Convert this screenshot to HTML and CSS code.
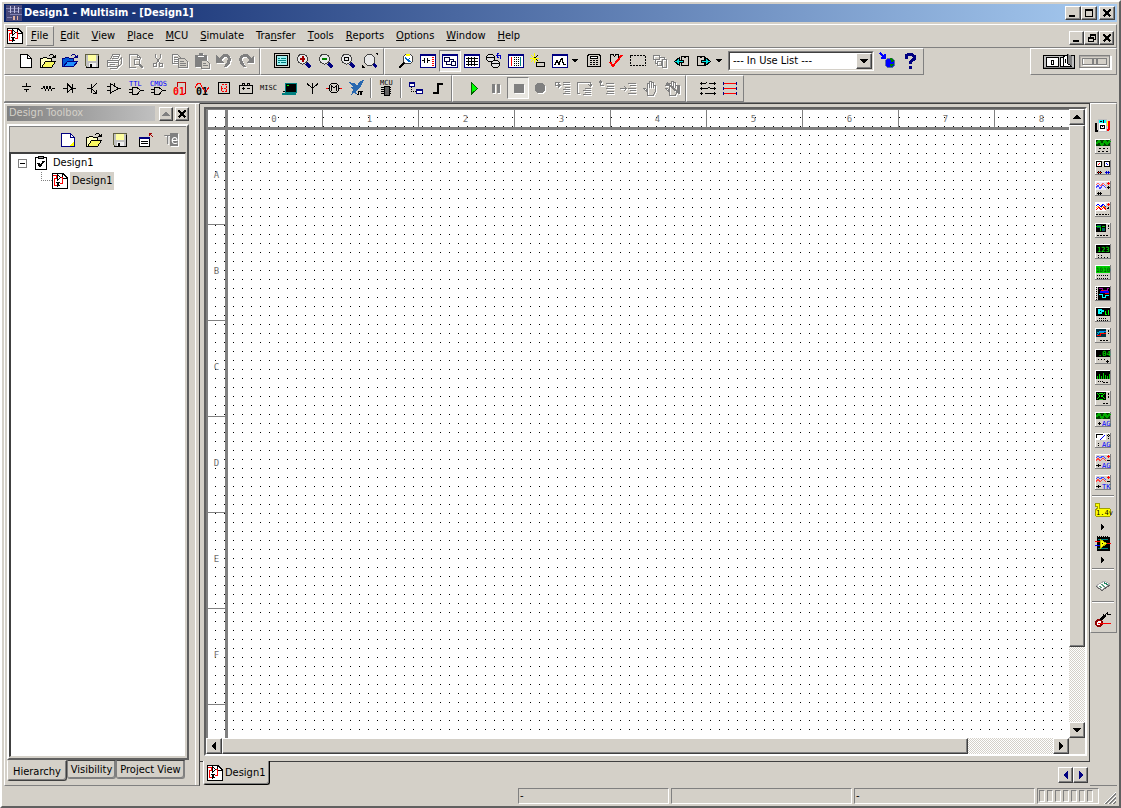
FILE: index.html
```html
<!DOCTYPE html>
<html lang="en">
<head>
  <meta charset="UTF-8"/>
  <meta name="viewport" content="width=device-width, initial-scale=1.0"/>
  <title>Design1 - Multisim - [Design1]</title>
  <link rel="stylesheet" href="styles.css">
</head>
<body>
  <!-- shared glyphs -->
  <svg class="sprite" aria-hidden="true">
    <symbol id="schematic" viewBox="0 0 16 16">
      <path d="M.5 .5H11L15.500 5V15.500H.5Z" fill="#fff"/>
      <path d="M10.500 1V5.500H15"/>
      <path d="M1 2.500H4.500V5.500H2.500V12.500H5.500M8 4.500H10.500V10.500H8" stroke="#f00"/>
      <path d="M5.500 2V7L8.500 4.500ZM4 9.500H7M5.500 8.500V13.500M6 10.500L8.500 8.500M6 11.500L8.500 13.500"/>
    </symbol>
    <symbol id="floppy" viewBox="0 0 16 16">
      <path d="M1.500 1.500H14.500V14.500H3.500L1.500 12.500Z" fill="#c0c0c0" stroke="#606040"/>
      <path d="M4 2H12V8H4Z" fill="#ffffa0" stroke="none"/>
      <path d="M5 10H12V14H5Z" fill="#f0f0f0" stroke="none"/>
      <path d="M6 11H8V14H6Z" fill="#000" stroke="none"/>
      <path d="M2 14.500H14.500V3"/>
    </symbol>
    <symbol id="folder" viewBox="0 0 16 16">
      <path d="M.5 14.500V5.500H2.500L3.500 4.500H6.500L7.500 5.500H11.500V8.500" fill="#ffffc0"/>
      <path d="M1.500 14.500L5.500 8.500H15.500L11.500 14.500Z" fill="#f8f860"/>
      <path d="M8.500 3.500L10.500 1.500H12.500L14.500 4M15.500 2V4.500H12"/>
    </symbol>
    <symbol id="lens" viewBox="0 0 16 16">
      <circle cx="6.500" cy="6" r="5" fill="#e8e8e8" stroke="#404040"/>
      <path d="M10.500 10.500L14.500 14.500" stroke="#000080" stroke-width="3"/>
    </symbol>
    <symbol id="up" viewBox="0 0 7 7"><path d="M0 5H7L3.500 1Z" fill="currentColor" stroke="none"/></symbol>
    <symbol id="down" viewBox="0 0 7 7"><path d="M0 2H7L3.500 6Z" fill="currentColor" stroke="none"/></symbol>
    <symbol id="left" viewBox="0 0 7 7"><path d="M5 0V7L1 3.500Z" fill="currentColor" stroke="none"/></symbol>
    <symbol id="right" viewBox="0 0 7 7"><path d="M2 0V7L6 3.500Z" fill="currentColor" stroke="none"/></symbol>
    <symbol id="close" viewBox="0 0 8 8"><path d="M.5 .5L7.500 7.500M7.500 .5L.5 7.500" stroke-width="2"/></symbol>
    <symbol id="case" viewBox="0 0 16 15">
      <path d="M0 0H16V15H0Z" fill="#d4d0c8" stroke="none"/>
      <path d="M.5 14.500V.5H15" stroke="#fff"/>
      <path d="M15.500 0V14.500H0" stroke="#808080"/>
    </symbol>
    <symbol id="gate" viewBox="0 0 16 16"><path d="M4.500 7.500H9L12.500 10.500L9 14.500H4.500ZM1 9.500H4M1 12.500H4M13 10.500H16"/></symbol>
    <symbol id="hand" viewBox="0 0 16 16"><path d="M5.500 15V12L1.500 8.500H3.500L5.500 10V3.500H7.500V8V1.500H9.500V8V2.500H11.500V8V5.500H13.500V11L11.500 15Z"/></symbol>
    <symbol id="pane" viewBox="0 0 16 16"><path d="M.5 1.500H15.500V14.500H.5Z" fill="#fff" stroke="#000080"/><path d="M0 2H16" stroke="#000080" stroke-width="2"/></symbol>
  </svg>

  <div class="window">
    <header class="titlebar">
      <svg class="icon" viewBox="0 0 16 16"><path d="M0 0H16V16H0Z" fill="#484878" stroke="none"/><path d="M0 3.500H16M2 6.500H12M4 9.500H16M1 12.500H6" stroke="#8080b0"/><path d="M4.500 1V8M8.500 1V8M12.500 2V8" stroke="#c0c0e0"/><path d="M7 11H9V15H7ZM11 11H12V15H11Z" fill="#e0b0a0" stroke="none"/></svg>
      <h1>Design1 - Multisim - [Design1]</h1>
      <div class="winbtns">
        <button class="winbtn" aria-label="Minimize"><svg class="glyph" viewBox="0 0 8 8"><path d="M0 7H6" stroke-width="2"/></svg></button>
        <button class="winbtn" aria-label="Maximize"><svg class="glyph" viewBox="0 0 8 8"><path d="M0 1H8" stroke-width="2"/><path d="M.5 1V7.500H7.500V1"/></svg></button>
        <button class="winbtn apart" aria-label="Close"><svg class="glyph" viewBox="0 0 8 8"><use href="#close"/></svg></button>
      </div>
    </header>

    <nav class="band menubar">
      <svg class="icon" viewBox="0 0 16 16"><use href="#schematic"/></svg>
      <div class="menus">
        <button class="menu hot"><u>F</u>ile</button>
        <button class="menu"><u>E</u>dit</button>
        <button class="menu"><u>V</u>iew</button>
        <button class="menu"><u>P</u>lace</button>
        <button class="menu"><u>M</u>CU</button>
        <button class="menu"><u>S</u>imulate</button>
        <button class="menu">Tra<u>n</u>sfer</button>
        <button class="menu"><u>T</u>ools</button>
        <button class="menu"><u>R</u>eports</button>
        <button class="menu"><u>O</u>ptions</button>
        <button class="menu"><u>W</u>indow</button>
        <button class="menu"><u>H</u>elp</button>
      </div>
      <div class="winbtns">
        <button class="winbtn small" aria-label="Minimize document"><svg class="glyph" viewBox="0 0 8 8"><path d="M0 7H6" stroke-width="2"/></svg></button>
        <button class="winbtn small" aria-label="Restore document"><svg class="glyph" viewBox="0 0 8 8"><path d="M2.500 3V.5H7.500V5.500H6M2 1.500H8M.5 3.500H5.500V7.500H.5ZM0 4.500H6"/></svg></button>
        <button class="winbtn small" aria-label="Close document"><svg class="glyph" viewBox="0 0 8 8"><use href="#close"/></svg></button>
      </div>
    </nav>

    <div class="rebar">
      <div class="band toolbar">
        <button class="tool" aria-label="New"><svg class="icon" viewBox="0 0 16 16"><path d="M2.500 1.500H9.500L13.500 5.500V14.500H2.500Z" fill="#fff"/><path d="M9.500 1.500V5.500H13.500"/></svg></button>
        <button class="tool" aria-label="Open"><svg class="icon" viewBox="0 0 16 16"><use href="#folder"/></svg></button>
        <button class="tool" aria-label="Open samples"><svg class="icon" viewBox="0 0 16 16"><path d="M.5 13.500V5.500H2.500L3.500 4.500H6.500L7.500 5.500H11.500V8.500" fill="#0058d8" stroke="#000080"/><path d="M1.500 13.500L5.500 8.500H15.500L11.500 13.500Z" fill="#2090ff" stroke="#000080"/><path d="M8.500 3.500L10.500 1.500H12.500L14.500 4M15.500 2V4.500H12" stroke="#000080"/></svg></button>
        <button class="tool" aria-label="Save"><svg class="icon" viewBox="0 0 16 16"><use href="#floppy"/></svg></button>
        <button class="tool off" aria-label="Print"><svg class="icon" viewBox="0 0 16 16"><path d="M4.500 6.500L6.500 1.500H13.500L11.500 6.500M1.500 7.500H12.500L15 5V11L12.500 13.500H1.500ZM1.500 9.500H12M12.500 7.500V13M7 3.500H12M6 5.500H11M3.500 11.500H9M4 15H11L13 13"/></svg></button>
        <button class="tool off" aria-label="Print preview"><svg class="icon" viewBox="0 0 16 16"><path d="M8 14.500H1.500V1.500H9.500L12.500 4.500V6M9.500 1.500V4.500H12.500"/><circle cx="9" cy="9" r="3"/><path d="M11 11L15 15" stroke-width="2"/></svg></button>
        <button class="tool off" aria-label="Cut"><svg class="icon" viewBox="0 0 16 16"><path d="M5.500 1V4L9.500 10M10.500 1V4L6.500 10"/><circle cx="5" cy="12" r="2"/><circle cx="11" cy="12" r="2"/></svg></button>
        <button class="tool off" aria-label="Copy"><svg class="icon" viewBox="0 0 16 16"><path d="M.5 1.500H5.500L8.500 4.500V10.500H.5ZM2 4.500H6M2 6.500H7M2 8.500H7"/><path d="M6.500 5.500H12.500L15.500 8.500V14.500H6.500Z" fill="#d4d0c8"/><path d="M8 8.500H12M8 10.500H14M8 12.500H14"/></svg></button>
        <button class="tool off" aria-label="Paste"><svg class="icon" viewBox="0 0 16 16"><path d="M1 2H5V0H9V2H13V14H1Z" fill="#808080" stroke="none"/><path d="M7.500 7.500H12.500L15.500 10.500V15.500H7.500Z" fill="#d4d0c8"/><path d="M9 10.500H12M9 12.500H14"/><path d="M4 3.500H10" stroke="#fff"/></svg></button>
        <button class="tool off" aria-label="Undo"><svg class="icon" viewBox="0 0 16 16"><path d="M0 2V10H8L5 7L8 4H11L12 6L11 9L8 14H11L14 10L15 6L13 2L10 1H7L3 5Z" fill="#808080" stroke="none"/></svg></button>
        <button class="tool off" aria-label="Redo"><svg class="icon" viewBox="0 0 16 16"><path d="M16 2V10H8L11 7L8 4H5L4 6L5 9L8 14H5L2 10L1 6L3 2L6 1H9L13 5Z" fill="#808080" stroke="none"/></svg></button>
      </div>
      <div class="band toolbar">
        <button class="tool" aria-label="Full screen"><svg class="icon" viewBox="0 0 16 16"><path d="M.5 .5H15.500V14.500H.5Z" fill="#d4d0c8"/><path d="M2.500 2.500H13.500V12.500H2.500Z" fill="#a0f0f0"/><path d="M4 5.500H6M7 5.500H12M4 7.500H12M4 9.500H6M7 9.500H12" stroke="#008080"/></svg></button>
        <button class="tool" aria-label="Zoom in"><svg class="icon" viewBox="0 0 16 16"><use href="#lens"/><path d="M4 6H9M6.500 3V9" stroke="#a00000" stroke-width="2"/></svg></button>
        <button class="tool" aria-label="Zoom out"><svg class="icon" viewBox="0 0 16 16"><use href="#lens"/><path d="M4 6H9" stroke="#008000" stroke-width="2"/></svg></button>
        <button class="tool" aria-label="Zoom area"><svg class="icon" viewBox="0 0 16 16"><use href="#lens"/><path d="M4.500 4.500H8.500V7.500H4.500Z"/></svg></button>
        <button class="tool" aria-label="Zoom fit"><svg class="icon" viewBox="0 0 16 16"><circle cx="7.500" cy="7" r="5.500" fill="#e8e8e8" stroke="#404040"/><path d="M11.500 11L14.500 14" stroke="#000080" stroke-width="3"/><path d="M13 0H16V3ZM0 12V15H3Z" fill="#000" stroke="none"/></svg></button>
      </div>
      <div class="band toolbar">
        <button class="tool" aria-label="Find"><svg class="icon" viewBox="0 0 16 16"><circle cx="10" cy="6" r="5" fill="#fff" stroke="#404040"/><path d="M6 10L1 15" stroke-width="2"/><path d="M7 4L10 6L13 3L11 7L13 9H10L8 7Z" fill="#0060c0" stroke="none"/><path d="M8 1H12V3H8Z" fill="#ff0" stroke="none"/></svg></button>
        <button class="tool" aria-label="Component"><svg class="icon" viewBox="0 0 16 16"><use href="#pane"/><path d="M2 7.500H4M4.500 5V10M7.500 5V10M8 7.500H10"/><path d="M12.500 4V13" stroke="#f00" stroke-width="2" stroke-dasharray="1 1"/></svg></button>
        <button class="tool pressed" aria-label="Design Toolbox"><svg class="icon" viewBox="0 0 16 16"><use href="#pane"/><path d="M2.500 4.500H7.500V8.500H2.500ZM9.500 8.500H13.500V12.500H9.500ZM8 6.500H11.500V8M4.500 9V11.500H9" stroke="#000040"/></svg></button>
        <button class="tool" aria-label="Spreadsheet"><svg class="icon" viewBox="0 0 16 16"><use href="#pane"/><path d="M2 5.500H14M2 8.500H14M2 11.500H14M4.500 4V13M7.500 4V13M10.500 4V13"/></svg></button>
        <button class="tool" aria-label="Database manager"><svg class="icon" viewBox="0 0 16 16"><path d="M.5 3.500L2.500 1.500H6.500L8.500 3.500V6.500L6.500 8.500H2.500L.5 6.500ZM5.500 9.500L7.500 7.500H11.500L13.500 9.500V12.500L11.500 14.500H7.500L5.500 12.500Z" fill="#e0e0e0"/><path d="M1 4.500H8M6 10.500H13"/><path d="M14.500 6V2.500H11M12.500 0L10.500 2.500L12.500 5" stroke="#0000c0"/></svg></button>
        <button class="tool" aria-label="Netlist"><svg class="icon" viewBox="0 0 16 16"><use href="#pane"/><path d="M3.500 4V13" stroke="#f00"/><path d="M6.500 4V13M8.500 4V13M10.500 4V13" stroke-dasharray="1 1"/><path d="M12.500 4V13" stroke="#008080"/></svg></button>
        <button class="tool" aria-label="Create component"><svg class="icon" viewBox="0 0 16 16"><path d="M4.500 0V10M0 5.500H9M1 2L8 9M8 2L1 9" stroke="#ffff00"/><path d="M3.500 4.500H6M8 2L6 4M8 8L6 6"/><path d="M6.500 9.500H14.500V13.500H6.500Z" fill="#d4d0c8"/></svg></button>
        <button class="tool" aria-label="Grapher"><svg class="icon" viewBox="0 0 16 16"><use href="#pane"/><path d="M2 11.500H3.500V9.500H4.500V7.500H5.500V9.500H6.500V11.500H7.500V8.500H8.500V6.500H9.500V5.500H10.500V9.500H11.500V11.500H14"/></svg></button>
        <button class="drop" aria-label="Grapher options"><svg class="glyph" viewBox="0 0 7 7"><path d="M1 2H6L3.500 5Z" fill="#000" stroke="none"/></svg></button>
        <button class="tool" aria-label="Postprocessor"><svg class="icon" viewBox="0 0 16 16"><path d="M1.500 2.500H2.500V1.500H13.500V2.500H14.500V13.500H1.500Z" fill="#d4d0c8"/><path d="M4.500 3.500H11.500V5.500H4.500Z" fill="#fff"/><path d="M4 7.500H13M4 9.500H13M4 11.500H13" stroke-dasharray="2 1"/></svg></button>
        <button class="tool" aria-label="Electrical rules check"><svg class="icon" viewBox="0 0 16 16"><path d="M2.500 10V1.500H5L6.500 3.500L8 1.500H10.500V7"/><path d="M2 9L5 13L14 2" stroke="#f00" stroke-width="2"/></svg></button>
        <button class="tool" aria-label="Capture area"><svg class="icon" viewBox="0 0 16 16"><path d="M.5 2.500H15.500V12.500H.5Z" stroke-dasharray="2 1"/></svg></button>
        <button class="tool off" aria-label="Parent sheet"><svg class="icon" viewBox="0 0 16 16"><path d="M1.500 2.500H7.500V6.500H1.500ZM5.500 8.500H9.500V12.500H5.500ZM10.500 6.500H14.500V14.500H10.500ZM8 4.500H12.500V6M3.500 7V10.500H5"/></svg></button>
        <button class="tool" aria-label="Back annotate"><svg class="icon" viewBox="0 0 16 16"><path d="M7.500 12.500V3.500H10L11 5L12 3.500H14.500V12.500H8"/><path d="M.5 8.500L5.500 4.500V7.500H9.500V9.500H5.500V12.500Z" fill="#00e0e0"/></svg></button>
        <button class="tool" aria-label="Forward annotate"><svg class="icon" viewBox="0 0 16 16"><path d="M1.500 12.500V3.500H4L5 5L6 3.500H8.500V12.500H2"/><path d="M14.500 8.500L9.500 4.500V7.500H5.500V9.500H9.500V12.500Z" fill="#00e0e0"/></svg></button>
        <button class="drop" aria-label="Annotate options"><svg class="glyph" viewBox="0 0 7 7"><path d="M1 2H6L3.500 5Z" fill="#000" stroke="none"/></svg></button>
        <div class="combo">
          <select aria-label="In use list"><option>--- In Use List ---</option></select>
          <span class="face"><svg class="glyph" viewBox="0 0 7 7"><use href="#down"/></svg></span>
        </div>
        <button class="tool" aria-label="Web site"><svg class="icon" viewBox="0 0 16 16"><circle cx="10" cy="10" r="5" fill="#0000ff" stroke="#6070a0"/><path d="M10 5L13 6L14 8L11 9ZM9 12L11 11L14 11L12 14Z" fill="#008000" stroke="none"/><path d="M0 0L5 5M5 1V5H1" stroke="#0000ff" stroke-width="2"/></svg></button>
        <button class="tool" aria-label="Help"><svg class="icon" viewBox="0 0 16 16"><path d="M4 6V3L6 1.500H10L12 3V6L8.500 9V11" stroke="#000080" stroke-width="3"/><path d="M7 13H10V16H7Z" fill="#000080" stroke="none"/></svg></button>
      </div>
      <div class="band toolbar sim">
        <button aria-label="Simulation switch"><svg class="icon wide" viewBox="0 0 32 16"><path d="M.5 1.500H31.500V14.500H.5Z" fill="#c0c0c0" stroke="#000"/><path d="M1 13.500H31" stroke="#808080"/><path d="M3.500 3.500H15.500V12.500H3.500ZM17.500 3.500H20V12.500H17.500Z" fill="#fff"/><path d="M20.500 12.500V3L24.500 .5V9L28.500 12.500Z" fill="#fff"/><path d="M24.500 0L29 2V12L24.500 9Z" fill="#808080" stroke="none"/><path d="M8.500 6.500H10.500V10.500H8.500ZM22.500 5V9"/></svg></button>
        <button aria-label="Pause switch"><svg class="icon wide" viewBox="0 0 32 16"><path d="M1 14.500H31.500V2" stroke="#fff" stroke-width="2"/><path d="M.5 1.500H30.500V13.500H.5Z" stroke="#808080"/><path d="M1 2.500H30M1.500 2V13" stroke="#b0aca8"/><path d="M4.500 5V11.500H28" stroke="#fff"/><path d="M3.500 4.500H27.500V10.500H3.500Z" stroke="#808080"/><path d="M14 4V11M18 4V11" stroke="#808080" stroke-width="2"/></svg></button>
      </div>
    </div>

    <div class="rebar">
      <div class="band toolbar">
        <button class="tool" aria-label="Source"><svg class="icon" viewBox="0 0 16 16"><path d="M8.500 3V6M4 6.500H13M6 9.500H11M8.500 9V12"/></svg></button>
        <button class="tool" aria-label="Basic"><svg class="icon" viewBox="0 0 16 16"><path d="M1 8L3 8L4 6L5.500 10L7 6L8.500 10L10 6L11.500 10L12.500 8H15"/></svg></button>
        <button class="tool" aria-label="Diode"><svg class="icon" viewBox="0 0 16 16"><path d="M1 8.500H5M5.500 4V12L10 8.500ZM10.500 4V13M11 8.500H14"/></svg></button>
        <button class="tool" aria-label="Transistor"><svg class="icon" viewBox="0 0 16 16"><path d="M3 8.500H7M7.500 4V13M7.500 8.500L12.500 3.500M7.500 8.500L12.500 13.500M9 13H12V10"/></svg></button>
        <button class="tool" aria-label="Analog"><svg class="icon" viewBox="0 0 16 16"><path d="M4.500 3.500V13L12.500 8.500ZM1 6.500H4M1 10.500H4M12.500 8.500H15M8.500 3V6"/></svg></button>
        <button class="tool" aria-label="TTL"><svg class="icon" viewBox="0 0 16 16"><use href="#gate"/><text class="mini blue" x="1" y="6">TTL</text></svg></button>
        <button class="tool" aria-label="CMOS"><svg class="icon" viewBox="0 0 16 16"><use href="#gate"/><text class="mini blue" x="0" y="6">CMOS</text></svg></button>
        <button class="tool" aria-label="Misc digital"><svg class="icon" viewBox="0 0 16 16"><path d="M5.500 7V2.500H13.500V13.500H12" stroke="#c00000"/><text class="mini big red" x="1" y="15">01</text></svg></button>
        <button class="tool" aria-label="Mixed"><svg class="icon" viewBox="0 0 16 16"><path d="M1 8L4 3H6L11 12H12L15 7" stroke="#f00"/><text class="mini big" x="2" y="15">01</text></svg></button>
        <button class="tool" aria-label="Indicator"><svg class="icon" viewBox="0 0 16 16"><path d="M2.500 2.500H13.500V13.500H2.500Z"/><path d="M5.500 4.500H10.500V11.500H5.500ZM5 8.500H11" stroke="#f00" stroke-dasharray="2 1"/></svg></button>
        <button class="tool" aria-label="Power"><svg class="icon" viewBox="0 0 16 16"><path d="M1.500 5.500H14.500V13.500H1.500ZM4.500 5V3.500H6.500V5M9.500 5V3.500H11.500V5M4 8.500H7M5.500 7V10M9 8.500H12"/></svg></button>
        <button class="tool" aria-label="Miscellaneous"><svg class="icon" viewBox="0 0 16 16"><text class="mini" x="0" y="10">MISC</text></svg></button>
        <button class="tool" aria-label="Advanced peripherals"><svg class="icon" viewBox="0 0 16 16"><path d="M3.500 3.500H14.500V12.500H3.500Z" fill="#000" stroke="#008080"/><path d="M0 13.500H14" stroke="#008080" stroke-width="2"/><path d="M1 11.500H3"/><path d="M5 5.500H7" stroke="#0f0"/></svg></button>
        <button class="tool" aria-label="RF"><svg class="icon" viewBox="0 0 16 16"><path d="M8.500 3V14M3 3.500L8.500 8.500L14 3.500"/></svg></button>
        <button class="tool" aria-label="Electromechanical"><svg class="icon" viewBox="0 0 16 16"><circle cx="8" cy="8" r="5"/><path d="M5.500 11V6L8 8L10.500 6V11M3 8.500H1M13 8.500H15"/><path d="M0 8.500H2M14 8.500H16" stroke="#f00"/></svg></button>
        <button class="tool" aria-label="NI components"><svg class="icon" viewBox="0 0 16 16"><path d="M0 2L6 3L9 6L12 1L16 0L13 6L10 9L8 12L10 15L6 13L3 15L5 10L3 7L6 7Z" fill="#2868b0" stroke="none"/><path d="M9 14.500H10.500V11.500H12.500V14.500H13.500V11.500H15"/></svg></button>
        <span class="sep"></span>
        <button class="tool" aria-label="MCU"><svg class="icon" viewBox="0 0 16 16"><text class="mini" x="2" y="5">MCU</text><path d="M6 6H11V15H6Z" fill="#606060"/><path d="M3 7.500H6M3 9.500H6M3 11.500H6M3 13.500H6M11 7.500H13M11 9.500H13M11 11.500H13M11 13.500H13"/></svg></button>
        <span class="sep"></span>
        <button class="tool" aria-label="Hierarchical block"><svg class="icon" viewBox="0 0 16 16"><path d="M1.500 2.500H6.500V6.500H1.500ZM8.500 9.500H14.500V13.500H8.500Z" fill="#fff" stroke="#000080"/><path d="M1 3H7M8 10H15" stroke="#000080" stroke-width="2"/><path d="M3.500 7V11.500H8" stroke-dasharray="1 1"/></svg></button>
        <button class="tool" aria-label="Bus"><svg class="icon" viewBox="0 0 16 16"><path d="M3 13H8V4H13" stroke-width="2"/></svg></button>
      </div>
      <div class="band toolbar">
        <button class="tool" aria-label="Run"><svg class="icon" viewBox="0 0 16 16"><path d="M5.500 2.500V14L11.500 8.500Z" fill="#0f0" stroke="#006000"/></svg></button>
        <button class="tool off" aria-label="Pause"><svg class="icon" viewBox="0 0 16 16"><path d="M5.500 4V13M10.500 4V13" stroke-width="3"/></svg></button>
        <button class="tool pressed off" aria-label="Stop"><svg class="icon" viewBox="0 0 16 16"><path d="M4 4H14V13H4Z" fill="#808080" stroke="none"/></svg></button>
        <button class="tool off" aria-label="Pause at next instruction"><svg class="icon" viewBox="0 0 16 16"><circle cx="8" cy="8" r="5" fill="#808080"/></svg></button>
        <button class="tool off" aria-label="Step into"><svg class="icon" viewBox="0 0 16 16"><path d="M6 2.500H1.500V5.500H6M4 3.500L6.500 5.500L4 7.500M9 2.500H16M9 4.500H16M11 7.500H16M9 9.500H16M11 11.500H16M9 13.500H16"/></svg></button>
        <button class="tool off" aria-label="Step over"><svg class="icon" viewBox="0 0 16 16"><path d="M14.500 6V2.500H1.500V13H4M12 4L14.500 6.500L16 4M9 8.500H15M7 10.500H15M9 12.500H15M7 14.500H15"/></svg></button>
        <button class="tool off" aria-label="Step out"><svg class="icon" viewBox="0 0 16 16"><path d="M6 5.500H2.500V1M.5 3.500L2.500 1L4.500 3.500M8 3.500H16M9 6.500H16M8 8.500H16M9 11.500H16M8 13.500H16"/></svg></button>
        <button class="tool off" aria-label="Run to cursor"><svg class="icon" viewBox="0 0 16 16"><path d="M0 8.500H6M4 6L6.500 8.500L4 11M8 3.500H16M10 5.500H16M8 8.500H16M10 10.500H16M8 13.500H16"/></svg></button>
        <button class="tool off" aria-label="Toggle breakpoint"><svg class="icon" viewBox="0 0 16 16"><use href="#hand"/></svg></button>
        <button class="tool off" aria-label="Remove breakpoints"><svg class="icon" viewBox="0 0 16 16"><use href="#hand"/><path d="M3 3L15 13M15 5V14M2 6L4 3" stroke-width="2"/></svg></button>
      </div>
      <div class="band toolbar">
        <button class="tool" aria-label="Branches"><svg class="icon" viewBox="0 0 16 16"><path d="M0 3.500H5L7.500 2.500M9 3.500H16M0 8.500H6L10 7.500M10 8.500H16M0 13.500H3M5 13.500H16M1.500 2V5M14.500 2V5M1.500 7V10M14.500 7V10M1.500 12V15M14.500 12V15"/></svg></button>
        <button class="tool" aria-label="Nets"><svg class="icon" viewBox="0 0 16 16"><path d="M2 3.500H14M2 8.500H14M2 13.500H14" stroke="#f00"/><path d="M1.500 2V5M14.500 2V5M1.500 7V10M14.500 7V10M1.500 12V15M14.500 12V15" stroke="#000080"/></svg></button>
      </div>
    </div>

    <main class="work">
      <aside class="dock">
        <div class="panel">
          <div class="caption">
            <h2>Design Toolbox</h2>
            <button class="winbtn tiny off" aria-label="Roll up"><svg class="glyph" viewBox="0 0 7 7"><use href="#up"/></svg></button>
            <button class="winbtn tiny" aria-label="Close toolbox"><svg class="glyph" viewBox="0 0 8 8"><use href="#close"/></svg></button>
          </div>
          <div class="box">
            <div class="boxbar">
              <button class="tool" aria-label="New design"><svg class="icon" viewBox="0 0 16 16"><path d="M1.500 1.500H10.500L14.500 5.500V14.500H1.500Z" fill="#fff" stroke="#000080"/><path d="M10.500 1.500V5.500H14.500" stroke="#000080"/><path d="M9 14L14 9V14Z" fill="#ff0" stroke="none"/></svg></button>
              <button class="tool" aria-label="Open design"><svg class="icon" viewBox="0 0 16 16"><use href="#folder"/></svg></button>
              <button class="tool" aria-label="Save design"><svg class="icon" viewBox="0 0 16 16"><use href="#floppy"/></svg></button>
              <button class="tool" aria-label="Close design"><svg class="icon" viewBox="0 0 16 16"><path d="M1.500 5.500H11.500V14.500H1.500Z" fill="#fff"/><path d="M1 6H12" stroke="#000080" stroke-width="2"/><path d="M3 9.500H10M3 11.500H10"/><path d="M15 5L11 1M11.500 4V1.500H14" stroke="#a00000"/></svg></button>
              <button class="tool off" aria-label="Rename"><svg class="icon" viewBox="0 0 16 16"><path d="M6 1H14V14H6Z" fill="#808080" stroke="none"/><text class="mini huge gray" x="0" y="12">T</text><text class="mini huge white" x="7" y="12">e</text></svg></button>
            </div>
            <ul class="tree">
              <li>
                <button class="expander" aria-label="Collapse"></button>
                <svg class="icon" viewBox="0 0 16 16"><path d="M2.500 2.500H13.500V14.500H2.500Z" fill="#fff"/><path d="M5.500 3.500V1.500H10.500V3.500Z" fill="#a0a0a0"/><path d="M5 8L7 11L11 6" stroke-width="2"/></svg>
                <span class="node">Design1</span>
              </li>
              <li class="child">
                <span class="elbow"></span>
                <svg class="icon" viewBox="0 0 16 16"><use href="#schematic"/></svg>
                <span class="node picked">Design1</span>
              </li>
            </ul>
          </div>
          <div class="tabs">
            <button class="tab current">Hierarchy</button>
            <button class="tab">Visibility</button>
            <button class="tab">Project View</button>
          </div>
        </div>
      </aside>

      <section class="desk">
        <div class="mdi">
          <div class="document">
            <div class="sheet">
              <div class="corner"></div>
              <div class="ruler across"><span>0</span><span>1</span><span>2</span><span>3</span><span>4</span><span>5</span><span>6</span><span>7</span><span>8</span></div>
              <div class="ruler downward"><span>A</span><span>B</span><span>C</span><span>D</span><span>E</span><span>F</span><span></span></div>
              <div class="canvas"></div>
            </div>
            <div class="scroll vertical">
              <button class="arrow" aria-label="Scroll up"><svg class="glyph" viewBox="0 0 7 7"><use href="#up"/></svg></button>
              <div class="thumb"></div>
              <div class="track"></div>
              <button class="arrow" aria-label="Scroll down"><svg class="glyph" viewBox="0 0 7 7"><use href="#down"/></svg></button>
            </div>
            <div class="scroll horizontal">
              <button class="arrow" aria-label="Scroll left"><svg class="glyph" viewBox="0 0 7 7"><use href="#left"/></svg></button>
              <div class="thumb"></div>
              <div class="track"></div>
              <button class="arrow" aria-label="Scroll right"><svg class="glyph" viewBox="0 0 7 7"><use href="#right"/></svg></button>
            </div>
          </div>
        </div>
        <div class="sheets">
          <button class="sheettab"><svg class="icon" viewBox="0 0 16 16"><use href="#schematic"/></svg>Design1</button>
          <div class="pager">
            <button class="arrow" aria-label="Previous sheet"><svg class="glyph" viewBox="0 0 7 7"><use href="#left"/></svg></button>
            <button class="arrow" aria-label="Next sheet"><svg class="glyph" viewBox="0 0 7 7"><use href="#right"/></svg></button>
          </div>
        </div>
      </section>

      <aside class="rail">
        <div class="band instruments">
          <button aria-label="Multimeter"><svg class="icon" viewBox="0 0 16 15"><path d="M3.500 1.500H11.500V13.500H3.500Z" fill="#fff" stroke="#c0c0c0"/><path d="M4 2H11V5H4Z" fill="#0ff" stroke="none"/><path d="M5 3.500H7M8.500 2V5M7 9L9 7"/><circle cx="7.500" cy="9" r="2"/><path d="M1 5V13H3" stroke-width="2"/><path d="M13 13L14 10V3" stroke="#f00" stroke-width="2"/><path d="M12.500 3V8" stroke="#ff0"/></svg></button>
          <button aria-label="Function generator"><svg class="icon" viewBox="0 0 16 15"><use href="#case"/><path d="M1 1H15V7H1Z" fill="#004000" stroke="none"/><path d="M1 5L4 2L7 6L10 2L12 5L15 2" stroke="#0a0" stroke-width="2"/><path d="M4 9.500H13M3 12.500H13" stroke-dasharray="2 2"/></svg></button>
          <button aria-label="Wattmeter"><svg class="icon" viewBox="0 0 16 15"><use href="#case"/><path d="M1.500 1.500H6.500V6.500H1.500ZM9.500 1.500H14.500V6.500H9.500Z" fill="#fff"/><path d="M3 5L5 3" stroke="#f00"/><path d="M11 3L13 5" stroke="#00f"/><path d="M2 12.500H7M3.500 11V14M5.500 11V14"/><path d="M10 12.500H15M11.500 11V14M13.500 11V14" stroke="#00c"/><path d="M3 12.500H4M5 12.500H6" stroke="#f00"/></svg></button>
          <button aria-label="Oscilloscope"><svg class="icon" viewBox="0 0 16 15"><use href="#case"/><path d="M1 1H11V9H1Z" fill="#e8e8f8" stroke="none"/><path d="M1 4L3 2L6 5L8 2L11 5" stroke="#f66"/><path d="M1 7L3 4L5 8L8 4L11 7" stroke="#44f"/><path d="M12 2.500H15M13.500 1V4" stroke="#f00"/><path d="M12 6.500H15M13.500 5V8M2 12.500H7M3.500 11V14M5.500 11V14"/></svg></button>
          <button aria-label="Four channel oscilloscope"><svg class="icon" viewBox="0 0 16 15"><use href="#case"/><path d="M1 1H11V9H1Z" fill="#fff" stroke="none"/><path d="M1 4L3 2L6 5L8 2L11 5" stroke="#00f"/><path d="M1 6L3 4L5 7L8 4L11 6" stroke="#fa0"/><path d="M1 8L4 5L6 8L9 5L11 8" stroke="#f00"/><path d="M12 2.500H15M13.500 1V4" stroke="#f00"/><path d="M12 6.500H15M13.500 5V8M1 12.500H14" stroke-dasharray="2 1"/></svg></button>
          <button aria-label="Bode plotter"><svg class="icon" viewBox="0 0 16 15"><use href="#case"/><path d="M1 1H11V9H1Z" fill="#000" stroke="none"/><path d="M2 2H6V5H2ZM7 5H10V8H7Z" fill="#006060" stroke="none"/><path d="M1 3L5 4L6 8M7 3.500H10" stroke="#0c0"/><path d="M13.500 2V6M2 12.500H14" stroke-dasharray="2 1"/></svg></button>
          <button aria-label="Frequency counter"><svg class="icon" viewBox="0 0 16 15"><use href="#case"/><path d="M1 1H15V9H1Z" fill="#000" stroke="none"/><text class="mini green" x="2" y="8">123</text><path d="M3 11.500H9M3 13.500H13" stroke-dasharray="1 2"/></svg></button>
          <button aria-label="Word generator"><svg class="icon" viewBox="0 0 16 15"><use href="#case"/><path d="M1 1H15V8H1Z" fill="#00d000" stroke="none"/><text class="mini dark" x="1" y="7">1010</text><path d="M2 10.500H14M2 13.500H14" stroke-dasharray="1 1"/></svg></button>
          <button aria-label="Logic converter"><svg class="icon" viewBox="0 0 16 15"><use href="#case"/><path d="M3 1H15V14H3Z" fill="#000" stroke="none"/><path d="M4 2.500H7V4.500H12V2.500H14" stroke="#a000a0"/><path d="M5 6H14" stroke="#00f" stroke-width="2"/><path d="M4 8.500H7V11.500H10V9.500H14" stroke="#0ff"/><path d="M6 4.500H9M10 7.500H14" stroke="#f00"/><path d="M1.500 1V14" stroke-dasharray="1 1"/></svg></button>
          <button aria-label="Logic analyzer"><svg class="icon" viewBox="0 0 16 15"><use href="#case"/><path d="M1 1H15V9H1Z" fill="#000" stroke="none"/><path d="M7 2.500H3.500V5.500H7M6 3.500H9" stroke="#0ff" stroke-width="2"/><path d="M10.500 4V7.500H12M13.500 3V8" stroke="#0f0"/><path d="M4 11.500H12M2 13.500H14" stroke-dasharray="1 1"/></svg></button>
          <button aria-label="IV analyzer"><svg class="icon" viewBox="0 0 16 15"><use href="#case"/><path d="M1 1H11V9H1Z" fill="#003040" stroke="none"/><path d="M2 8L5 3H11" stroke="#08f"/><path d="M2 7.500H5V5.500H11" stroke="#f00"/><path d="M2 4.500H9" stroke="#0aa"/><path d="M13.500 2V6M5 12.500H13" stroke-dasharray="2 1"/></svg></button>
          <button aria-label="Distortion analyzer"><svg class="icon" viewBox="0 0 16 15"><use href="#case"/><path d="M1 1H15V8H1Z" fill="#000" stroke="none"/><text class="mini green" x="3" y="7">.04</text><path d="M3 10.500H10" stroke-dasharray="1 2"/><path d="M11 12.500H14M12.500 11V14"/></svg></button>
          <button aria-label="Spectrum analyzer"><svg class="icon" viewBox="0 0 16 15"><use href="#case"/><path d="M1 1H15V9H1Z" fill="#000" stroke="none"/><path d="M2.500 6V9M4.500 4V9M6.500 6V9M8.500 3V9M10.500 5V9M12.500 6V9M14.500 4V9" stroke="#0c0"/><path d="M3 11.500H8" stroke-dasharray="1 1"/><path d="M8 12.500H14" stroke-dasharray="2 1"/></svg></button>
          <button aria-label="Network analyzer"><svg class="icon" viewBox="0 0 16 15"><use href="#case"/><path d="M1 1H11V9H1Z" fill="#000" stroke="none"/><path d="M2 2L5 5L2 8M10 2L7 5L10 8M4 2H8M4 8H8M6 4V6" stroke="#0e0"/><path d="M13.500 2V7M8 12.500H14" stroke-dasharray="2 1"/></svg></button>
          <button aria-label="Agilent function generator"><svg class="icon" viewBox="0 0 16 15"><use href="#case"/><path d="M1 1H15V7H1Z" fill="#004000" stroke="none"/><path d="M1 5L4 2L7 6L10 2L12 5L15 2" stroke="#0a0" stroke-width="2"/><path d="M3 11.500H6M4.500 10V13"/><text class="mini blue" x="7" y="14">AG</text></svg></button>
          <button aria-label="Agilent multimeter"><svg class="icon" viewBox="0 0 16 15"><use href="#case"/><path d="M1 1H11V7H1Z" fill="#fff" stroke="none"/><path d="M1 1.500H8M1.500 2V5"/><path d="M5 7L10 2" stroke="#00f"/><path d="M12 2.500H15M13.500 1V7M3.500 10V13" stroke-dasharray="1 1"/><text class="mini blue" x="7" y="14">AG</text></svg></button>
          <button aria-label="Agilent oscilloscope"><svg class="icon" viewBox="0 0 16 15"><use href="#case"/><path d="M1 4L3 2L5 4L8 2L11 5" stroke="#44f"/><path d="M1 7L3 4L5 7L8 4L11 7" stroke="#f44"/><path d="M12 2.500H15M13.500 1V4" stroke="#f00"/><path d="M12 6.500H15M1 11.500H6M3.500 10V13"/><text class="mini blue" x="7" y="14">AG</text></svg></button>
          <button aria-label="Tektronix oscilloscope"><svg class="icon" viewBox="0 0 16 15"><use href="#case"/><path d="M1 4L3 2L5 4L8 2L11 5" stroke="#44f"/><path d="M1 7L3 4L5 7L8 4L11 7" stroke="#f44"/><path d="M12 2.500H15M13.500 1V4" stroke="#f00"/><path d="M12 6.500H15M1 11.500H6M3.500 10V13"/><text class="mini blue" x="7" y="14">TK</text></svg></button>
          <span class="rule"></span>
          <button aria-label="Measurement probe"><svg class="icon" viewBox="0 0 16 15"><path d="M.5 .5H4.500V5.500H14.500L15.500 6.500V12.500L14.500 13.500H1.500L.5 12.500V6.500L2.500 5.500V3.500H.5Z" fill="#ff0" stroke="#a0a000"/><text class="mini" x="1" y="12">1.4v</text></svg></button>
          <button class="more" aria-label="More probes"><svg class="glyph" viewBox="0 0 7 7"><path d="M2 1V6L5 3.500Z" fill="#000" stroke="none"/></svg></button>
          <button aria-label="LabVIEW instruments"><svg class="icon" viewBox="0 0 16 15"><path d="M2 1H14V14H2Z" fill="#000"/><path d="M3 3.500H13M3 12.500H13" stroke="#008080"/><path d="M5.500 3.500V12L11.500 7.500Z" fill="#ff0" stroke="#c0c000"/><path d="M0 5.500H5M12 7.500H16" stroke="#f00"/><path d="M0 9.500H5" stroke="#00f"/><path d="M7 7.500H9M2 .5H14M2 14.500H14" stroke-dasharray="1 1"/></svg></button>
          <button class="more" aria-label="More LabVIEW instruments"><svg class="glyph" viewBox="0 0 7 7"><path d="M2 1V6L5 3.500Z" fill="#000" stroke="none"/></svg></button>
          <span class="rule"></span>
          <button class="tall" aria-label="NI ELVISmx"><svg class="icon" viewBox="0 0 16 15"><path d="M1 7L9 2L15 5L7 11Z" fill="#fff" stroke="#b0b0b0"/><path d="M6 5L10 8M4 7L7 9" stroke="#60a080"/><path d="M9 3L13 5L12 6L8 4Z" fill="#208060" stroke="none"/><path d="M1 7.500L7 11.500L15 6" stroke="#606060"/></svg></button>
          <span class="rule"></span>
          <button class="tall" aria-label="Current probe"><svg class="icon" viewBox="0 0 16 15"><circle cx="4" cy="11" r="3" fill="#fff" stroke="#900000" stroke-width="2"/><path d="M6 8L10 3" stroke-width="3"/><path d="M10 3L12 1V2.500H16"/><path d="M3 11.500H16" stroke="#f00"/></svg></button>
        </div>
      </aside>
    </main>

    <footer class="status">
      <span class="pane short">-</span>
      <span class="pane"></span>
      <span class="pane">-</span>
      <span class="pane meter"><i></i><i></i><i></i><i></i><i></i><i></i><i></i></span>
      <svg class="grip" viewBox="0 0 12 12"><path d="M1 12L12 1M5 12L12 5M9 12L12 9" stroke="#808080" stroke-width="2"/><path d="M0 12L12 0M4 12L12 4M8 12L12 8" stroke="#fff"/></svg>
    </footer>
  </div>
</body>
</html>
```

FILE: styles.css
```css
* { box-sizing: border-box; }
body { margin: 0; background: #d4d0c8; color: #000; font: 11px/14px "DejaVu Sans Condensed", "DejaVu Sans", Tahoma, sans-serif; }
button { margin: 0; padding: 0; border: 0; background: none; color: inherit; font: inherit; flex: none; display: flex; align-items: center; justify-content: center; }
h1, h2, ul { margin: 0; padding: 0; font: inherit; list-style: none; }
.sprite { display: none; }
.icon, .glyph, .grip { flex: none; fill: none; stroke: #000; shape-rendering: crispEdges; }
.icon { width: 16px; height: 16px; overflow: visible; }
.wide { width: 32px; }
.glyph { width: 8px; height: 8px; }
.off .icon { stroke: #808080; filter: drop-shadow(1px 1px 0 #fff); }

/* lettering inside icons */
.mini { font: 7px "DejaVu Sans Mono", monospace; fill: #000; stroke: none; }
.big { font-size: 10px; font-weight: bold; }
.huge { font-size: 12px; }
.blue { fill: #00f; }
.red { fill: #f00; }
.green { fill: #0f0; }
.dark { fill: #004000; font-size: 6px; }
.gray { fill: #808080; }
.white { fill: #fff; }

.window { height: 100vh; display: flex; flex-direction: column; padding: 2px; border: 2px solid; border-color: #fff #606060 #606060 #fff; overflow: hidden; }

/* title and menus */
.titlebar { flex: none; height: 18px; margin-bottom: 2px; padding: 0 2px; display: flex; align-items: center; gap: 2px; background: linear-gradient(90deg, #0a246a, #a6caf0); }
.titlebar h1 { color: #fff; font-weight: bold; }
.winbtns { display: flex; margin-left: auto; }
.winbtn { width: 16px; height: 14px; background: #d4d0c8; border: 1px solid; border-color: #fff #404040 #404040 #fff; box-shadow: inset -1px -1px #808080; }
.apart { margin-left: 2px; }
.small { width: 15px; }
.tiny { width: 14px; margin-left: 2px; }
.tiny.off { color: #808080; }
.band { border: 1px solid; border-color: #fff #808080 #808080 #fff; }
.menubar { flex: none; height: 24px; display: flex; align-items: center; padding: 0 2px; }
.menubar .winbtns { padding-top: 4px; }
.menus { display: flex; margin-left: 3px; }
.menu { height: 20px; padding: 0 5px; border: 1px solid transparent; }
.hot { padding: 0 5px 0 4px; border-color: #fff #808080 #808080 #fff; }

/* toolbars */
.rebar { flex: none; display: flex; height: 27px; }
.toolbar { display: flex; align-items: center; padding: 0 2px 1px 10px; }
.tool { width: 22px; height: 22px; }
.pressed { border: 1px solid; border-color: #808080 #fff #fff #808080; background: #e8e6e0; }
.drop { width: 12px; height: 22px; justify-content: flex-start; }
.sep { width: 2px; height: 20px; margin: 0 3px; border-left: 1px solid #808080; border-right: 1px solid #fff; }
.sim { margin-left: auto; gap: 4px; padding: 0 5px 0 12px; }
.combo { position: relative; width: 146px; height: 20px; margin: 0 3px 0 1px; border: 1px solid; border-color: #808080 #fff #fff #808080; }
.combo select { appearance: none; width: 100%; height: 18px; margin: 0; padding: 0 18px 0 3px; border: 1px solid; border-color: #404040 #d4d0c8 #d4d0c8 #404040; border-radius: 0; background: #fff; color: #000; font: inherit; display: block; }
.face { position: absolute; top: 1px; right: 1px; width: 16px; height: 16px; display: flex; align-items: center; justify-content: center; pointer-events: none; background: #d4d0c8; border: 1px solid; border-color: #fff #404040 #404040 #fff; box-shadow: inset -1px -1px #808080; }

/* design toolbox */
.work { flex: 1; min-height: 0; display: flex; border-top: 1px solid #808080; }
.dock { flex: none; width: 196px; display: flex; padding-right: 3px; border: 1px solid; border-color: #fff #404040 #808080 #fff; }
.panel { flex: 1; display: flex; flex-direction: column; padding: 2px 6px 4px 2px; border-right: 1px solid #fff; }
.caption { display: flex; align-items: center; height: 15px; }
.caption h2 { flex: 1; height: 15px; padding: 0 2px; margin-right: 2px; color: #d4d0c8; background: linear-gradient(90deg, #808080, #c0c0c0); }
.box { flex: 1; display: flex; flex-direction: column; margin-top: 3px; padding: 0 1px 1px 0; border: 2px solid; border-color: #fff #606060 #606060 #fff; }
.boxbar { display: flex; justify-content: flex-end; gap: 4px; height: 26px; padding: 2px 3px 0; border-top: 1px solid #808080; border-left: 1px solid #808080; }
.tree { flex: 1; padding-left: 7px; background: #fff; border: 1px solid; border-width: 2px 1px 1px 2px; border-color: #404040 #d4d0c8 #d4d0c8 #404040; }
.tree li { display: flex; align-items: center; height: 18px; }
.expander { position: relative; width: 9px; height: 9px; margin-right: 6px; border: 1px solid #808080; }
.expander::after { content: ""; width: 5px; height: 1px; background: #000; }
.node { padding: 2px; margin-left: 2px; }
.picked { background: #d4d0c8; }
.child { padding-left: 23px; }
.elbow { width: 11px; height: 9px; margin-bottom: 9px; border: 1px dotted #808080; border-width: 0 0 1px 1px; }
.tabs { display: flex; align-items: flex-start; height: 21px; }
.tab { height: 19px; padding: 0 3px; border: 1px solid #808080; border-top-color: #404040; border-radius: 0 0 3px 3px; box-shadow: inset -1px -1px #808080; }
.current { height: 21px; padding: 2px 5px 0; border-color: #d4d0c8 #404040 #404040 #fff; }

/* document */
.desk { flex: 1; min-width: 0; display: flex; flex-direction: column; }
.mdi { flex: 1; min-height: 0; display: flex; padding: 3px 2px 5px 4px; border: 1px solid #404040; border-left: 0; }
.document { flex: 1; min-width: 0; display: grid; grid-template: minmax(0, 1fr) 16px / minmax(0, 1fr) 16px; border: 2px solid; border-color: #606060 #fff #fff #606060; }
.sheet { display: grid; grid-template: 20px minmax(0, 1fr) / 20px minmax(0, 1fr); min-height: 0; overflow: hidden; border: solid #808080; border-width: 1px 0 0 2px; background: #fff conic-gradient(from 270deg at 1px 1px, #000 90deg, transparent 0) 7px 7px / 9px 9px; color: #707070; font: 9px/12px "DejaVu Sans Mono", monospace; }
.corner, .across { border-bottom: 3px solid #808080; }
.corner, .downward { border-right: 3px solid #808080; }
.ruler { display: flex; min-width: 0; min-height: 0; overflow: hidden; }
.ruler span { flex: none; display: flex; align-items: center; justify-content: center; }
.across span { width: 96px; border-right: 1px solid #808080; padding-right: 2px; }
.across span:first-child { width: 95px; }
.downward { flex-direction: column; }
.downward span { height: 96px; border-bottom: 1px solid #808080; padding-bottom: 4px; }
.downward span:first-child { height: 95px; }
.scroll { display: flex; min-width: 0; min-height: 0; background: repeating-conic-gradient(#fff 0 25%, #d4d0c8 0 50%) 0 0 / 2px 2px; }
.vertical { flex-direction: column; }
.arrow { width: 16px; height: 16px; }
.arrow, .thumb { background: #d4d0c8; border: 1px solid; border-color: #fff #404040 #404040 #fff; box-shadow: inset -1px -1px #808080; }
.thumb { flex: 522; }
.track { flex: 75; }
.horizontal .thumb { flex: 746; }
.horizontal .track { flex: 85; }
.sheets { flex: none; display: flex; justify-content: space-between; height: 24px; padding: 0 2px 0 3px; }
.sheettab { height: 24px; padding: 0 4px 0 3px; gap: 2px; margin-top: -1px; background: #d4d0c8; border: 1px solid #000; border-top: 0; border-left-color: #fff; border-radius: 0 0 3px 3px; box-shadow: inset -1px -1px #808080; }
.pager { display: flex; padding-top: 5px; color: #000080; }
.pager .arrow { width: 15px; }

/* instruments */
.rail { flex: none; width: 27px; border-bottom: 1px solid #808080; }
.instruments { display: flex; flex-direction: column; align-items: center; padding: 11px 2px 0 0; }
.instruments button { width: 22px; height: 21px; }
.instruments .icon { height: 15px; }
.instruments .more { height: 12px; }
.instruments .tall { height: 26px; }
.rule { width: 22px; height: 2px; margin: 2px 0 3px; border-top: 1px solid #808080; border-bottom: 1px solid #fff; }

/* status bar */
.status { flex: none; display: flex; justify-content: flex-end; align-items: flex-end; gap: 2px; height: 18px; }
.pane { width: 181px; height: 16px; padding-left: 1px; border: 1px solid; border-color: #808080 #fff #fff #808080; }
.short { width: 151px; }
.meter { width: 62px; display: flex; gap: 2px; padding: 1px; }
.meter i { width: 6px; border: 1px solid; border-color: #808080 #fff #fff #808080; }
.grip { width: 12px; height: 12px; margin: 0 1px 0 3px; }
```
